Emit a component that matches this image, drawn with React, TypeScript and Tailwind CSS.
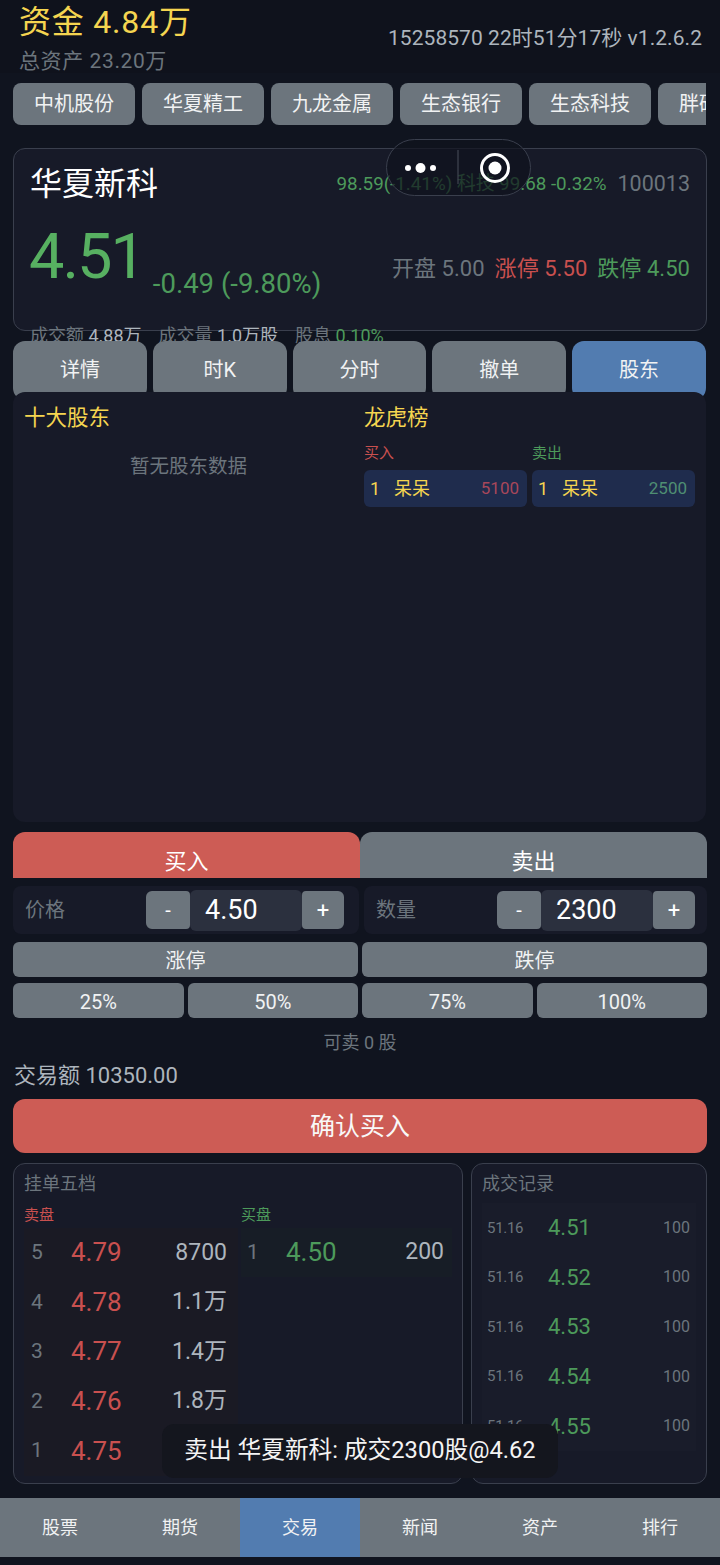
const FONT = "font-['Roboto','Noto_Sans_CJK_SC',sans-serif]";

const watchlist = ['中机股份', '华夏精工', '九龙金属', '生态银行', '生态科技', '胖砖股份'];
const tabs = ['详情', '时K', '分时', '撤单', '股东'];
const navs = ['股票', '期货', '交易', '新闻', '资产', '排行'];
const asks = [
  ['5', '4.79', '8700'],
  ['4', '4.78', '1.1万'],
  ['3', '4.77', '1.4万'],
  ['2', '4.76', '1.8万'],
  ['1', '4.75', '2.2万'],
];
const trades = ['4.51', '4.52', '4.53', '4.54', '4.55'];

function Stepper({ label, value, inset }: { label: string; value: string; inset: string }) {
  return (
    <div className={`flex h-12 flex-1 items-center rounded-lg bg-[#171a28] pl-3 ${inset}`}>
      <span className="flex-1 text-[20px] text-[#6c757d]">{label}</span>
      <button className="h-[38px] w-[44px] rounded-l-md rounded-r-sm bg-[#6c757d] text-[20px] text-white">-</button>
      <span className="flex h-[41px] w-[112px] items-center rounded-md bg-[#2b303e] pl-[15px] text-[27px] text-white">{value}</span>
      <button className="h-[38px] w-[42px] rounded-l-sm rounded-r-md bg-[#6c757d] text-[22px] text-white">+</button>
    </div>
  );
}

function GrayButton({ label }: { label: string }) {
  return (
    <button className="h-[35px] flex-1 rounded-md bg-[#6c757d] pt-[2px] text-[20px] text-[#f1f2f3]">{label}</button>
  );
}

export default function App() {
  return (
    <div className={`${FONT} relative h-[1565px] w-[720px] overflow-hidden bg-[#10141f]`}>
      {/* header */}
      <div className="flex h-[73px] items-start justify-between bg-[#0f121c] pl-[19px] pr-[18px]">
        <div>
          <div className="mt-[4px] h-[36px] text-[32px] leading-[36px] tracking-[0.8px] text-[#f5d550]">资金 4.84万</div>
          <div className="mt-[8px] text-[21px] leading-[26px] tracking-[0.6px] text-[#6c757d]">总资产 23.20万</div>
        </div>
        <div className="mt-[24px] text-[21px] leading-[28px] tracking-[0.05px] text-[#adb5bd]">15258570 22时51分17秒 v1.2.6.2</div>
      </div>

      {/* watchlist */}
      <div className="mx-[13px] mt-[10px] flex h-[42px] w-[693px] gap-[7px] overflow-hidden">
        {watchlist.map((name) => (
          <div key={name} className="flex h-[42px] w-[122px] shrink-0 items-center justify-center rounded-lg bg-[#6c757d] text-[20px] text-[#f1f2f3]">
            {name}
          </div>
        ))}
      </div>

      {/* stock card */}
      <div className="mx-[13px] mt-[23px] h-[183px] rounded-xl border border-[#3a3f4d] bg-[#171a28] pl-[16px] pr-[16px]">
        <div className="flex h-[68px] items-center justify-between pt-[2px]">
          <span className="text-[32px] text-white">华夏新科</span>
          <div className="mt-[1px] flex items-center text-[18.8px]">
            <span className="text-[#4d9a5b]">98.59(-1.41%) 科技 99.68 -0.32%</span>
            <span className="ml-[11px] text-[21.5px] text-[#6c757d]">100013</span>
          </div>
        </div>
        <div className="flex h-[79px] items-end justify-between">
          <div className="flex items-end">
            <span className="ml-[-1px] mb-[2px] text-[63px] leading-[74px] tracking-[-2px] text-[#57b061]">4.51</span>
            <span className="mb-[-5px] ml-[9px] text-[27.5px] leading-[34px] text-[#4d9a5b]">-0.49 (-9.80%)</span>
          </div>
          <div className="mb-[12px] flex gap-[10px] text-[22px] leading-[30px] tracking-[0.05px]">
            <span className="text-[#6c757d]">开盘 5.00</span>
            <span className="text-[#c9504f]">涨停 5.50</span>
            <span className="text-[#4d9a5b]">跌停 4.50</span>
          </div>
        </div>
        <div className="mt-[28px] flex gap-[17px] text-[18px] leading-[24px]">
          <span className="text-[#6c757d]">成交额 <span className="text-[#adb5bd]">4.88万</span></span>
          <span className="text-[#6c757d]">成交量 <span className="text-[#adb5bd]">1.0万股</span></span>
          <span className="text-[#6c757d]">股息 <span className="text-[#4d9a5b]">0.10%</span></span>
        </div>
      </div>

      {/* detail tabs */}
      <div className="relative ml-[13px] mt-[10px] flex h-[59px] w-[693px] gap-[6px]">
        {tabs.map((t) => (
          <div key={t} className={`flex h-[59px] flex-1 items-start justify-center rounded-xl pt-[14px] text-[20px] text-[#f1f2f3] ${t === '股东' ? 'bg-[#527cb0]' : 'bg-[#6c757d]'}`}>
            {t}
          </div>
        ))}
      </div>

      {/* shareholder panel */}
      <div className="relative ml-[13px] mt-[-8px] flex h-[430px] w-[693px] rounded-xl bg-[#171a28] pl-[11px] pr-[11px] pt-[12px]">
        <div className="w-[340px]">
          <div className="text-[21.5px] leading-[27px] text-[#f5d550]">十大股东</div>
          <div className="mt-[23px] pr-[11px] text-center text-[19.5px] leading-[26px] text-[#6c757d]">暂无股东数据</div>
        </div>
        <div className="flex-1">
          <div className="text-[21.5px] leading-[27px] text-[#f5d550]">龙虎榜</div>
          <div className="mt-[11px] flex gap-[5px]">
            {[
              { title: '买入', qty: '5100', head: 'text-[#c9504f]', num: 'text-[#a8475a]' },
              { title: '卖出', qty: '2500', head: 'text-[#4d9a5b]', num: 'text-[#4f8f73]' },
            ].map((col) => (
              <div key={col.title} className="flex-1">
                <div className={`text-[15px] leading-[22px] ${col.head}`}>{col.title}</div>
                <div className="mt-[6px] flex h-[37px] items-center rounded-md bg-[#1f2c4d] pl-[6px] pr-[8px] text-[18px] text-[#f5d550]">
                  <span className="w-[24px]">1</span>
                  <span className="flex-1">呆呆</span>
                  <span className={`text-[17px] ${col.num}`}>{col.qty}</span>
                </div>
              </div>
            ))}
          </div>
        </div>
      </div>

      {/* buy / sell */}
      <div className="mx-[13px] mt-[10px] flex h-[46px]">
        <div className="flex flex-1 items-end justify-center rounded-t-xl bg-[#cd5c55] text-[22px] leading-[33px] text-white">买入</div>
        <div className="flex flex-1 items-end justify-center rounded-t-xl bg-[#6c757d] text-[22px] leading-[33px] text-white">卖出</div>
      </div>
      <div className="mx-[13px] mt-[8px] flex gap-[5px]">
        <Stepper label="价格" value="4.50" inset="pr-[15px]" />
        <Stepper label="数量" value="2300" inset="pr-[12px]" />
      </div>
      <div className="mx-[13px] mt-[8px] flex gap-[4px]">
        <GrayButton label="涨停" />
        <GrayButton label="跌停" />
      </div>
      <div className="mx-[13px] mt-[6px] flex gap-[4px]">
        <GrayButton label="25%" />
        <GrayButton label="50%" />
        <GrayButton label="75%" />
        <GrayButton label="100%" />
      </div>
      <div className="mt-[13px] text-center text-[18px] leading-[24px] text-[#6c757d]">可卖 0 股</div>
      <div className="ml-[14px] mt-[6px] text-[22px] leading-[30px] text-[#adb5bd]">交易额 10350.00</div>
      <button className="mx-[13px] mt-[8px] block h-[54px] w-[694px] rounded-xl bg-[#cd5c55] pt-px text-[25px] text-[#f8f8f8]">确认买入</button>

      {/* order book + trades */}
      <div className="mx-[13px] mt-[10px] flex h-[321px] gap-[8px]">
        <div className="w-[450px] rounded-xl border border-[#3a3f4d] bg-[#171a28] px-[10px] pt-[7px]">
          <div className="text-[18px] leading-[26px] text-[#6c757d]">挂单五档</div>
          <div className="mt-[8px] flex">
            <div className="w-[214px]">
              <div className="text-[15px] leading-[21px] text-[#c9504f]">卖盘</div>
              <div className="mt-[2px] bg-[#1a1a24]">
                {asks.map(([lvl, price, qty]) => (
                  <div key={lvl} className="flex h-[49.6px] items-center pr-[11px]">
                    <span className="w-[47px] pl-[7px] text-[21px] text-[#6c757d]">{lvl}</span>
                    <span className="flex-1 text-[26px] text-[#c9504f]">{price}</span>
                    <span className="text-[23px] text-[#adb5bd]">{qty}</span>
                  </div>
                ))}
              </div>
            </div>
            <div className="ml-[3px] flex-1">
              <div className="text-[15px] leading-[21px] text-[#4d9a5b]">买盘</div>
              <div className="mt-[2px] flex h-[49px] items-center bg-[#171d26] pr-[8px]">
                <span className="w-[45px] pl-[6px] text-[21px] text-[#6c757d]">1</span>
                <span className="flex-1 text-[26px] text-[#4d9a5b]">4.50</span>
                <span className="text-[23px] text-[#adb5bd]">200</span>
              </div>
            </div>
          </div>
        </div>
        <div className="flex-1 rounded-xl border border-[#3a3f4d] bg-[#171a28] px-[10px] pt-[7px]">
          <div className="text-[18px] leading-[26px] text-[#6c757d]">成交记录</div>
          <div className="mt-[6px] bg-[#191c2a]">
            {trades.map((p) => (
              <div key={p} className="flex h-[49.6px] items-center pl-[5px] pr-[6px]">
                <span className="w-[61px] text-[15px] tracking-[-0.3px] text-[#6c757d]">51.16</span>
                <span className="flex-1 text-[22px] text-[#4d9a5b]">{p}</span>
                <span className="text-[16px] text-[#6c757d]">100</span>
              </div>
            ))}
          </div>
        </div>
      </div>

      {/* bottom nav */}
      <div className="mt-[14px] flex h-[59px]">
        {navs.map((n) => (
          <div key={n} className={`flex flex-1 items-center justify-center text-[18px] text-[#f1f2f3] ${n === '交易' ? 'bg-[#527cb0]' : 'bg-[#6c757d]'}`}>
            {n}
          </div>
        ))}
      </div>

      {/* wechat capsule */}
      <div className="absolute left-[386px] top-[139px] flex h-[57px] w-[145px] items-center rounded-full border border-[#3a3f4d] bg-[#0f121c]/70">
        <svg width="143" height="55" viewBox="0 0 143 55" fill="none">
          <circle cx="21" cy="28" r="3" fill="#fff" />
          <circle cx="33.500" cy="28" r="5" fill="#fff" />
          <circle cx="46" cy="28" r="3" fill="#fff" />
          <line x1="71" y1="10" x2="71" y2="44" stroke="#4a4e5a" strokeWidth="1" />
          <circle cx="108" cy="28" r="13.500" stroke="#fff" strokeWidth="3" />
          <circle cx="108" cy="28" r="6.500" fill="#fff" />
        </svg>
      </div>

      {/* toast */}
      <div className="absolute left-[162px] top-[1424px] flex h-[54px] w-[396px] items-center justify-center rounded-xl bg-[#14161e] text-[23.7px] text-[#f4f4f4]">
        卖出 华夏新科: 成交2300股@4.62
      </div>
    </div>
  );
}
